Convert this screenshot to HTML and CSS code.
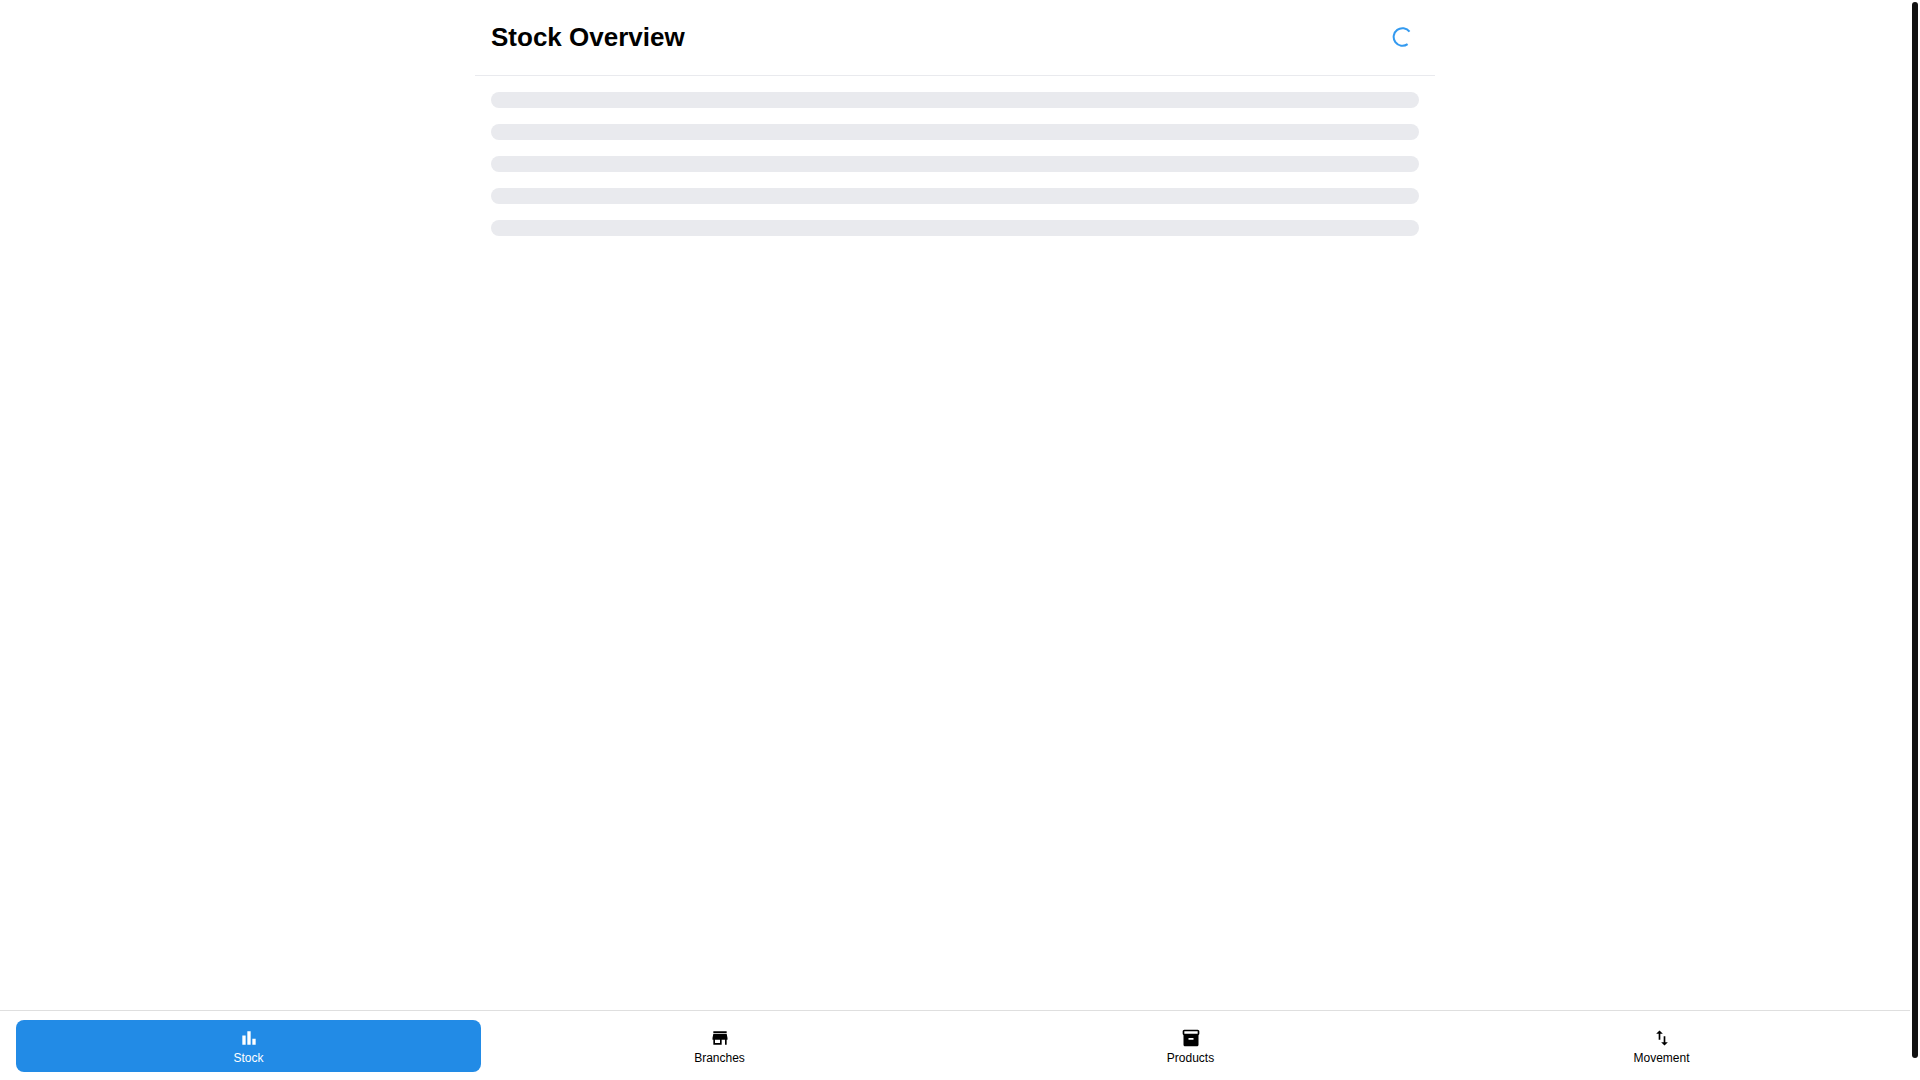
FILE: index.html
```html
<!DOCTYPE html>
<html lang="en">
<head>
<meta charset="utf-8">
<meta name="viewport" content="width=device-width, initial-scale=1">
<title>Stock Overview</title>
<link rel="stylesheet" href="styles.css">
</head>
<body>
<div class="app">
  <main class="page">
    <header class="page-header">
      <h1 class="page-title">Stock Overview</h1>
      <button class="refresh" type="button" aria-label="Refresh" aria-busy="true">
        <svg class="spinner" viewBox="0 0 20 20" aria-hidden="true"><path d="M17.5 4.7A8.8 8.8 0 1 0 15.6 17.1" fill="none" stroke="currentColor" stroke-width="2"/></svg>
      </button>
    </header>
    <div class="skeletons" aria-hidden="true">
      <div class="skeleton"></div>
      <div class="skeleton"></div>
      <div class="skeleton"></div>
      <div class="skeleton"></div>
      <div class="skeleton"></div>
    </div>
  </main>
  <nav class="tabs">
    <a class="tab tab-active" href="#stock" aria-current="page">
      <svg class="tab-icon" viewBox="0 0 24 24" aria-hidden="true"><path d="M4 9h4v11H4zM16 13h4v7h-4zM10 4h4v16h-4z"/></svg>
      <span>Stock</span>
    </a>
    <a class="tab" href="#branches">
      <svg class="tab-icon" viewBox="0 0 24 24" aria-hidden="true"><path d="M20 4H4v2h16V4zm1 10v-2l-1-5H4l-1 5v2h1v6h10v-6h4v6h2v-6h1zm-9 4H6v-4h6v4z"/></svg>
      <span>Branches</span>
    </a>
    <a class="tab" href="#products">
      <svg class="tab-icon" viewBox="0 0 24 24" aria-hidden="true"><path d="M20 2H4c-1 0-2 .9-2 2v3.01c0 .72.43 1.34 1 1.69V20c0 1.1 1.1 2 2 2h14c.9 0 2-.9 2-2V8.7c.57-.35 1-.97 1-1.69V4c0-1.1-1-2-2-2zm-5 12H9v-2h6v2zm5-7H4V4h16v3z"/></svg>
      <span>Products</span>
    </a>
    <a class="tab" href="#movement">
      <svg class="tab-icon" viewBox="0 0 24 24" aria-hidden="true"><path d="M9 3L5 6.99h3V14h2V6.99h3L9 3zm7 14.01V10h-2v7.01h-3L15 21l4-3.99h-3z"/></svg>
      <span>Movement</span>
    </a>
  </nav>
</div>
<div class="scroll-thumb" aria-hidden="true"></div>
</body>
</html>
```
FILE: styles.css
```css
* {
  box-sizing: border-box;
}

body {
  margin: 0;
  background: #fff;
  color: #000;
  font-family: "Liberation Sans", Arial, sans-serif;
}

.app {
  display: flex;
  flex-direction: column;
  min-height: 100vh;
  padding-right: 10px;
}

.page {
  flex: 1;
  width: 100%;
  max-width: 960px;
  margin: 0 auto;
}

.page-header {
  display: flex;
  align-items: center;
  justify-content: space-between;
  min-height: 76px;
  padding: 16px 16px 17px;
  border-bottom: 1px solid #e9eaee;
}

.page-title {
  margin: 0;
  font-size: 26px;
  line-height: 36px;
  font-weight: 700;
}

.refresh {
  display: flex;
  align-items: center;
  justify-content: center;
  width: 34px;
  height: 34px;
  padding: 0;
  border: 0;
  background: transparent;
  color: #339af0;
}

.spinner {
  width: 20px;
  height: 20px;
}

.skeletons {
  display: flex;
  flex-direction: column;
  gap: 16px;
  padding: 16px;
}

.skeleton {
  height: 16px;
  border-radius: 8px;
  background: #e9eaee;
}

.tabs {
  display: grid;
  grid-template-columns: repeat(4, 1fr);
  gap: 6px;
  padding: 9px 16px 8px;
  border-top: 1px solid #dfdfdf;
}

.tab {
  display: flex;
  flex-direction: column;
  align-items: center;
  padding: 8px 8px 4px;
  border-radius: 8px;
  color: #000;
  font-size: 12px;
  line-height: 20px;
  text-decoration: none;
}

.tab-active {
  background: #228be6;
  color: #fff;
}

.tab-icon {
  width: 20px;
  height: 20px;
  fill: currentColor;
}

.scroll-thumb {
  position: fixed;
  top: 2px;
  right: 2px;
  bottom: 22px;
  width: 6px;
  border-radius: 3px;
  background: #111;
}
```
